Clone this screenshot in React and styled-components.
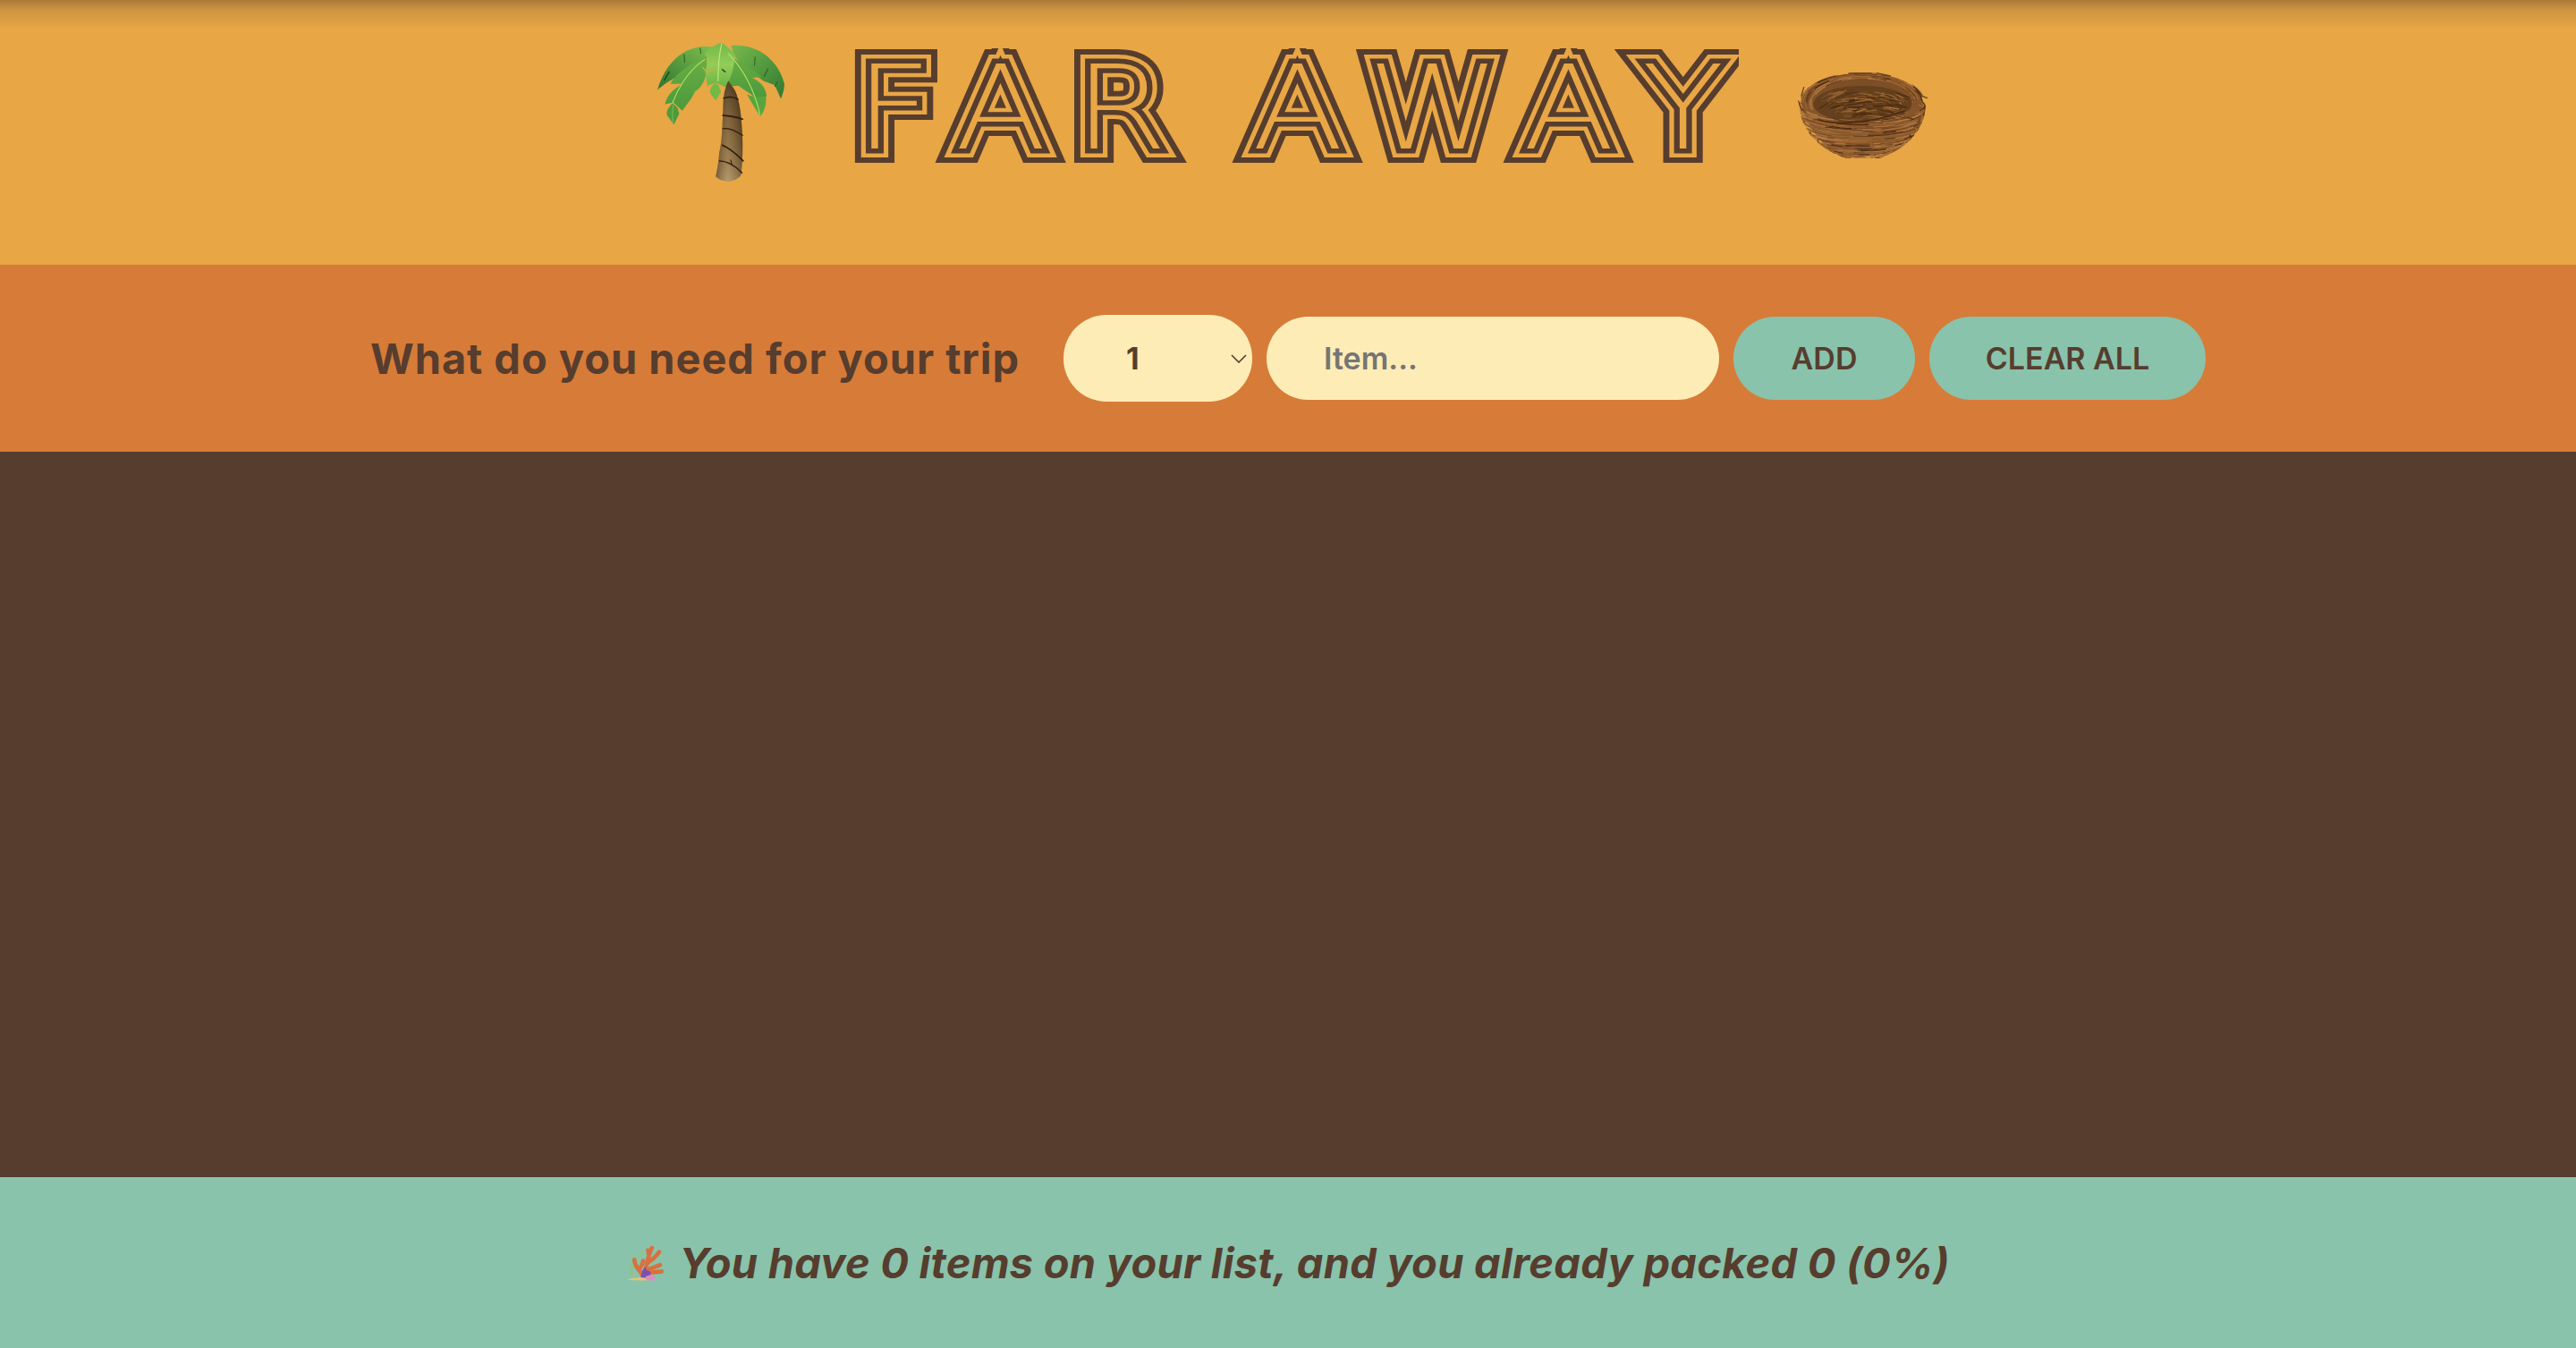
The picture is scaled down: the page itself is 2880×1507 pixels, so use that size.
import React from 'react';
import styled, { createGlobalStyle } from 'styled-components';

const BROWN = '#563d2e';
const SAND = '#e8a645';
const ORANGE = '#d77b38';
const GREEN = '#89c3ab';
const CREAM = '#fdecb6';

const GlobalStyle = createGlobalStyle`
  * { box-sizing: border-box; }
  html, body { margin: 0; padding: 0; }
  body {
    font-family: Inter, Lato, sans-serif;
    font-weight: 700;
    color: ${BROWN};
    background: ${BROWN};
  }
`;

const Page = styled.div`
  height: 100vh;
  display: grid;
  grid-template-rows: 296px 209px 1fr 191px;
`;

const Header = styled.header`
  display: flex;
  justify-content: center;
  align-items: flex-start;
  padding-left: 10px;
  background: linear-gradient(#ab7a38 0, #cf9540 12px, ${SAND} 32px);
`;

const Palm = styled.svg`
  width: 142px;
  height: 157px;
  margin-top: 47px;
  margin-right: 74px;
  flex: none;
`;

const Nest = styled.svg`
  width: 145px;
  height: 96px;
  margin-top: 81px;
  margin-left: 71px;
  flex: none;
`;

// wider than tall like the reference lettering, the clip gives the flat tops
const Title = styled.h1`
  display: flex;
  margin: 54px 129px 0 0;
  height: 130px;
  font-family: "DejaVu Sans", sans-serif;
  font-weight: 200;
  font-size: 130px;
  line-height: 135px;
  transform: scaleX(1.15);
  transform-origin: left top;
  clip-path: inset(0 -60px);
`;

// each letter is three stacked strokes, the pseudo layers sit above all base layers
const Letter = styled.span`
  position: relative;
  display: block;
  width: ${(p) => p.$w}px;
  text-align: center;
  white-space: pre;
  color: ${BROWN};
  -webkit-text-stroke: 32px ${BROWN};

  &::before,
  &::after {
    content: attr(data-c);
    position: absolute;
    left: 0;
    top: 0;
    width: 100%;
  }
  &::before {
    z-index: 1;
    color: ${SAND};
    -webkit-text-stroke: 20px ${SAND};
  }
  &::after {
    z-index: 2;
    color: ${SAND};
    -webkit-text-stroke: 11px ${BROWN};
    paint-order: stroke fill;
  }
`;

const Form = styled.form`
  display: flex;
  justify-content: center;
  align-items: center;
  gap: 16px;
  background: ${ORANGE};
`;

const Label = styled.h3`
  margin: 0 33px 0 0;
  font-size: 47px;
  font-weight: 700;
  letter-spacing: 0.95px;
`;

const SelectWrap = styled.div`
  position: relative;
  width: 211px;
  height: 97px;
`;

const Select = styled.select`
  appearance: none;
  width: 100%;
  height: 100%;
  border: none;
  border-radius: 48px;
  padding-left: 70px;
  background: ${CREAM};
  color: ${BROWN};
  font: 700 34px Inter, sans-serif;
`;

const Chevron = styled.svg`
  position: absolute;
  right: 6px;
  top: 44px;
  width: 18px;
  height: 10px;
  pointer-events: none;
`;

const Input = styled.input`
  width: 506px;
  height: 93px;
  border: none;
  border-radius: 47px;
  padding: 0 64px;
  background: ${CREAM};
  color: ${BROWN};
  font: 600 34px Inter, sans-serif;

  &::placeholder {
    color: #757575;
    opacity: 1;
  }
`;

const Button = styled.button`
  width: ${(p) => p.$w}px;
  height: 93px;
  padding: 0;
  border: none;
  border-radius: 47px;
  background: ${GREEN};
  color: ${BROWN};
  font: 600 34px Inter, sans-serif;
  text-transform: uppercase;
`;

const List = styled.main`
  background: ${BROWN};
`;

const Stats = styled.footer`
  display: flex;
  justify-content: center;
  align-items: center;
  gap: 17px;
  background: ${GREEN};
  font-size: 47px;
  font-style: italic;
  font-weight: 700;
  letter-spacing: 0.25px;
`;

const Coral = styled.svg`
  width: 42px;
  height: 41px;
  flex: none;
`;

function PalmIcon() {
  return (
    <Palm viewBox="45 50 425 470">
      <defs>
        <linearGradient id="pBack" x1="0" y1="0" x2="1" y2="1">
          <stop offset="0" stopColor="#78b84c" />
          <stop offset="1" stopColor="#2f7a32" />
        </linearGradient>
        <linearGradient id="pBackL" x1="1" y1="0" x2="0" y2="1">
          <stop offset="0" stopColor="#7ebf4e" />
          <stop offset="1" stopColor="#2e7430" />
        </linearGradient>
        <linearGradient id="pLeaf" x1="0" y1="0" x2="0" y2="1">
          <stop offset="0" stopColor="#6aae44" />
          <stop offset="1" stopColor="#4c9a3b" />
        </linearGradient>
        <linearGradient id="pMid" x1="0" y1="0" x2="0" y2="1">
          <stop offset="0" stopColor="#73b948" />
          <stop offset="0.5" stopColor="#92cd57" />
          <stop offset="1" stopColor="#6cb445" />
        </linearGradient>
        <linearGradient id="pTrunk" x1="0" y1="0" x2="0" y2="1">
          <stop offset="0" stopColor="#35220f" />
          <stop offset="0.35" stopColor="#6b4d28" />
          <stop offset="0.8" stopColor="#947548" />
          <stop offset="1" stopColor="#b09568" />
        </linearGradient>
        <linearGradient id="pSide" x1="0" y1="0" x2="1" y2="0">
          <stop offset="0" stopColor="#2a1a08" stopOpacity="0.45" />
          <stop offset="0.45" stopColor="#c4a878" stopOpacity="0.25" />
          <stop offset="1" stopColor="#2a1a08" stopOpacity="0.4" />
        </linearGradient>
      </defs>
      <path d="M228 66C150 58 78 100 45 210C66 192 82 182 100 172L165 150L206 112Z" fill="url(#pBackL)" />
      <path d="M292 62C380 54 450 110 470 190C470 210 464 226 458 240C450 222 444 206 436 194L400 180L330 130L300 92Z" fill="url(#pBack)" />
      <path d="M210 98C160 120 110 150 88 190L130 190C104 204 78 224 70 258L98 252L128 280L160 236L172 214C192 204 208 176 210 140Z" fill="url(#pLeaf)" />
      <path d="M96 255C82 266 72 284 78 296L100 326L118 290L112 270Z" fill="#4f9a3b" />
      <path d="M276 88C312 110 358 136 394 167L362 170C388 182 407 200 411 232L372 236C356 222 338 212 316 196L268 200Z" fill="url(#pLeaf)" />
      <path d="M345 226L372 234L408 232C411 252 404 282 390 298C380 285 366 262 358 248Z" fill="#58a53d" />
      <path d="M238 188C222 200 217 215 225 226L240 246L258 216L250 195Z" fill="#72ba48" />
      <path d="M260 52C235 60 210 75 203 92L215 106L205 150L212 196L240 186L272 200C290 172 300 150 305 92C285 70 270 58 260 52Z" fill="url(#pMid)" />
      <g fill="none" strokeLinecap="round">
        <path d="M260 55C252 90 248 140 248 180" stroke="#c8ec7c" strokeWidth="3" />
        <path d="M204 108C160 135 120 190 96 252" stroke="#b7e36e" strokeWidth="3" />
        <path d="M98 262C94 280 95 300 97 318" stroke="#93cf62" strokeWidth="2" />
        <path d="M282 88C322 130 365 190 388 292" stroke="#b7e36e" strokeWidth="3" />
        <path d="M134 92L136 118M188 70L190 88M372 100L370 128M415 140L402 165M448 182L438 198" stroke="#2d5c22" strokeWidth="3" />
        <path d="M262 142L272 150M84 150L68 178" stroke="#1f3d14" strokeWidth="4" />
        <path d="M196 135L212 152M218 148L238 140" stroke="#e0a24a" strokeWidth="4" />
      </g>
      <path d="M282 180C268 210 265 240 265 270C262 330 262 380 252 420C250 450 245 480 240 500C260 522 305 522 325 495C330 450 332 400 328 340C325 280 315 225 300 205Z" fill="url(#pTrunk)" />
      <path d="M282 180C268 210 265 240 265 270C262 330 262 380 252 420C250 450 245 480 240 500C260 522 305 522 325 495C330 450 332 400 328 340C325 280 315 225 300 205Z" fill="url(#pSide)" />
      <g fill="none" stroke="#2e1d0c" strokeLinecap="round">
        <path d="M266 238C285 232 300 232 315 242" strokeWidth="4" />
        <path d="M264 295C285 298 310 300 330 308" strokeWidth="5" />
        <path d="M264 340C285 335 310 350 330 362" strokeWidth="4" />
        <path d="M262 395C285 405 310 425 332 448" strokeWidth="5" />
        <path d="M252 448C275 448 305 462 328 488" strokeWidth="4" />
        <path d="M290 445L295 462" strokeWidth="3" />
      </g>
    </Palm>
  );
}

// small seeded generator, keeps the nest the same between renders
function makeStrands() {
  let seed = 17;
  const rnd = () => {
    seed = (seed * 16807) % 2147483647;
    return seed / 2147483647;
  };
  const out = [];
  const lightCols = ['#a56d3a', '#99632f', '#8a5a2e', '#b17a44', '#7a4a24', '#4f2e14'];
  const innerCols = ['#7a4c24', '#5f3919', '#94612f', '#4a2b11', '#a87238'];
  const line = (pts) => 'M' + pts.map((p) => p[0].toFixed(1) + ' ' + p[1].toFixed(1)).join('L');
  for (let i = 0; i < 420; i++) {
    const v = rnd();
    const rx = 210 * Math.sqrt(1 - v * v * 0.96);
    const cy = 168 + v * 172;
    const ry = 100 * (1 - v * 0.6);
    const start = -1.7 + rnd() * 3.2;
    const len = 0.2 + rnd() * 0.5;
    const pts = [];
    for (let k = 0; k < 5; k++) {
      const a = start + (len * k) / 4;
      pts.push([277 + rx * Math.sin(a), cy + ry * Math.cos(a) * 0.55]);
    }
    out.push({ d: line(pts), c: lightCols[Math.floor(rnd() * lightCols.length)], w: 1.5 + rnd() * 3.5 });
  }
  for (let i = 0; i < 150; i++) {
    const a0 = Math.PI * 0.5 + rnd() * Math.PI;
    const r = 0.82 + rnd() * 0.2;
    const pts = [];
    for (let k = 0; k < 4; k++) {
      const a = a0 + k * 0.12;
      pts.push([277 + 205 * r * Math.sin(a), 165 + 100 * r * Math.cos(a)]);
    }
    out.push({ d: line(pts), c: lightCols[Math.floor(rnd() * lightCols.length)], w: 1.5 + rnd() * 3 });
  }
  for (let i = 0; i < 170; i++) {
    const x = 130 + rnd() * 290;
    const y = 125 + rnd() * 95;
    const dx = 18 + rnd() * 40;
    const tilt = (x - 277) * 0.12 + (rnd() - 0.5) * 14;
    const inside = ((x - 277) / 165) ** 2 + ((y - 168) / 62) ** 2 < 0.9;
    if (!inside) continue;
    out.push({ d: `M${x.toFixed(1)} ${y.toFixed(1)}l${dx.toFixed(1)} ${tilt.toFixed(1)}`, c: innerCols[Math.floor(rnd() * innerCols.length)], w: 1.5 + rnd() * 3 });
  }
  return out;
}

const strands = makeStrands();

function NestIcon() {
  return (
    <Nest viewBox="60 62 435 288">
      <defs>
        <linearGradient id="nBody" x1="0" y1="0" x2="0" y2="1">
          <stop offset="0" stopColor="#7a4c24" />
          <stop offset="1" stopColor="#94612f" />
        </linearGradient>
      </defs>
      <path d="M70 160C85 105 170 68 278 66C385 68 470 110 482 170C480 250 400 345 255 348C170 340 95 270 70 160Z" fill="url(#nBody)" />
      <ellipse cx="277" cy="168" rx="165" ry="62" fill="#64401e" />
      <g fill="none" strokeLinecap="round">
        {strands.map((s, i) => (
          <path key={i} d={s.d} stroke={s.c} strokeWidth={s.w} />
        ))}
        <path d="M130 220C190 240 300 235 420 190" stroke="#4a2a12" strokeWidth="5" />
        <path d="M62 158L74 190M80 112L72 140M325 64L370 74M470 138L494 148" stroke="#6a4220" strokeWidth="4" />
      </g>
    </Nest>
  );
}

function CoralIcon() {
  return (
    <Coral viewBox="42 32 128 124">
      <g fill="none" strokeLinecap="round">
        <path d="M58 140C58 118 70 92 98 56M58 100L66 132M84 72L70 92" stroke="#8fc48a" strokeWidth="7" strokeDasharray="9 4" />
        <g stroke="#d9703f" strokeWidth="14">
          <path d="M100 142C92 122 72 112 70 84" />
          <path d="M84 118C96 108 98 98 100 88" />
          <path d="M104 140C112 112 112 78 130 44" />
          <path d="M116 94C130 86 146 70 155 58" />
          <path d="M114 118C130 112 145 108 158 102" />
          <path d="M120 128C135 128 150 125 163 124" />
          <path d="M120 68L116 52" />
        </g>
      </g>
      <path d="M45 152C70 142 120 142 140 150C120 156 70 156 45 152Z" fill="#e6c36d" />
      <path d="M92 144L97 122L106 108L113 120L126 126L122 148Z" fill="#7f4fb0" />
      <ellipse cx="125" cy="146" rx="18" ry="9" fill="#d88ec0" />
    </Coral>
  );
}

const letters = [
  ['F', 83.5],
  ['A', 125.2],
  ['R', 107.8],
  [' ', 55.7],
  ['A', 125.2],
  ['W', 139],
  ['A', 123.5],
  ['Y', 99],
];

export default function App() {
  return (
    <Page>
      <GlobalStyle />
      <Header>
        <PalmIcon />
        <Title>
          {letters.map(([c, w], i) => (
            <Letter key={i} $w={w} data-c={c}>{c}</Letter>
          ))}
        </Title>
        <NestIcon />
      </Header>
      <Form onSubmit={(e) => e.preventDefault()}>
        <Label>What do you need for your trip</Label>
        <SelectWrap>
          <Select defaultValue="1">
            {Array.from({ length: 20 }, (_, i) => (
              <option key={i} value={i + 1}>{i + 1}</option>
            ))}
          </Select>
          <Chevron viewBox="0 0 18 10">
            <path d="M1 1L9 9L17 1" fill="none" stroke="#563d2e" strokeWidth="1.6" />
          </Chevron>
        </SelectWrap>
        <Input placeholder="Item..." />
        <Button $w={203}>Add</Button>
        <Button $w={309} type="button">Clear all</Button>
      </Form>
      <List />
      <Stats>
        <CoralIcon />
        <em>You have 0 items on your list, and you already packed 0 (0%)</em>
      </Stats>
    </Page>
  );
}
